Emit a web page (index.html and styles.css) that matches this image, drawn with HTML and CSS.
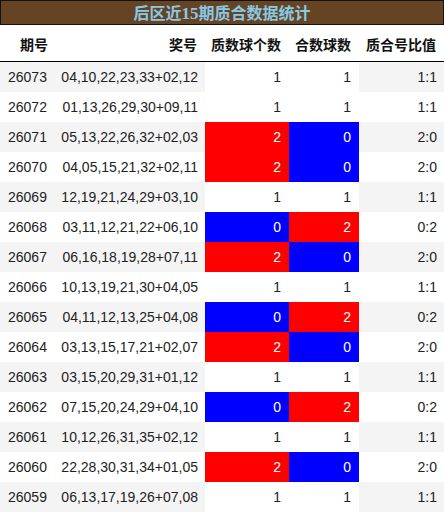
FILE: index.html
```html
<!DOCTYPE html>
<html lang="zh">
<head>
<meta charset="utf-8">
<link rel="stylesheet" href="styles.css">
</head>
<body>
<div class="title">后区近<span class="num">15</span>期质合数据统计</div>
<table class="stats">
<colgroup>
<col class="c1"><col class="c2"><col class="c3"><col class="c4"><col class="c5">
</colgroup>
<thead>
<tr><th class="left">期号</th><th>奖号</th><th>质数球个数</th><th>合数球数</th><th>质合号比值</th></tr>
</thead>
<tbody>
<tr><td class="left">26073</td><td>04,10,22,23,33+02,12</td><td class="n">1</td><td class="n">1</td><td>1:1</td></tr>
<tr><td class="left">26072</td><td>01,13,26,29,30+09,11</td><td class="n">1</td><td class="n">1</td><td>1:1</td></tr>
<tr><td class="left">26071</td><td>05,13,22,26,32+02,03</td><td class="n red">2</td><td class="n blue">0</td><td>2:0</td></tr>
<tr><td class="left">26070</td><td>04,05,15,21,32+02,11</td><td class="n red">2</td><td class="n blue">0</td><td>2:0</td></tr>
<tr><td class="left">26069</td><td>12,19,21,24,29+03,10</td><td class="n">1</td><td class="n">1</td><td>1:1</td></tr>
<tr><td class="left">26068</td><td>03,11,12,21,22+06,10</td><td class="n blue">0</td><td class="n red">2</td><td>0:2</td></tr>
<tr><td class="left">26067</td><td>06,16,18,19,28+07,11</td><td class="n red">2</td><td class="n blue">0</td><td>2:0</td></tr>
<tr><td class="left">26066</td><td>10,13,19,21,30+04,05</td><td class="n">1</td><td class="n">1</td><td>1:1</td></tr>
<tr><td class="left">26065</td><td>04,11,12,13,25+04,08</td><td class="n blue">0</td><td class="n red">2</td><td>0:2</td></tr>
<tr><td class="left">26064</td><td>03,13,15,17,21+02,07</td><td class="n red">2</td><td class="n blue">0</td><td>2:0</td></tr>
<tr><td class="left">26063</td><td>03,15,20,29,31+01,12</td><td class="n">1</td><td class="n">1</td><td>1:1</td></tr>
<tr><td class="left">26062</td><td>07,15,20,24,29+04,10</td><td class="n blue">0</td><td class="n red">2</td><td>0:2</td></tr>
<tr><td class="left">26061</td><td>10,12,26,31,35+02,12</td><td class="n">1</td><td class="n">1</td><td>1:1</td></tr>
<tr><td class="left">26060</td><td>22,28,30,31,34+01,05</td><td class="n red">2</td><td class="n blue">0</td><td>2:0</td></tr>
<tr><td class="left">26059</td><td>06,13,17,19,26+07,08</td><td class="n">1</td><td class="n">1</td><td>1:1</td></tr>
</tbody>
</table>
</body>
</html>
```
FILE: styles.css
```css
html, body {
  margin: 0;
  padding: 0;
  background: #ffffff;
}
body {
  width: 444px;
  font-family: "Liberation Sans", Arial, "Noto Sans CJK SC", sans-serif;
  color: #222222;
}
.title {
  box-sizing: border-box;
  height: 25px;
  border: 1px solid #111111;
  background: #664423;
  color: #87c9e6;
  font-family: "Noto Sans CJK SC", sans-serif;
  font-weight: bold;
  font-size: 16px;
  line-height: 22px;
  text-align: center;
}
.title .num {
  font-family: "Liberation Serif", "Noto Sans CJK SC", serif;
  font-weight: bold;
  font-size: 17px;
}
.stats {
  width: 444px;
  border-collapse: collapse;
  table-layout: fixed;
  margin-top: 1px;
}
.c1 { width: 57px; }
.c2 { width: 148px; }
.c3 { width: 84px; }
.c4 { width: 70px; }
.c5 { width: 85px; }
.stats th {
  height: 35px;
  padding: 0 8px 0 0;
  font-family: "Noto Sans CJK SC", sans-serif;
  font-weight: bold;
  font-size: 14px;
  color: #111111;
  text-align: right;
  border-bottom: 1px solid #000000;
  white-space: nowrap;
}
.stats th.left {
  text-align: left;
  padding: 0 0 0 20px;
}
.stats td {
  height: 30px;
  padding: 0 7px 0 0;
  font-size: 14px;
  text-align: right;
  white-space: nowrap;
}
.stats td.left {
  text-align: left;
  padding: 0 0 0 8px;
}
.stats tbody tr:nth-child(odd) td {
  background: #f4f4f4;
}
.stats tbody tr td.n {
  background: #ffffff;
  padding-right: 8px;
}
.stats tbody tr td.red {
  background: #ff0000;
  color: #ffffff;
}
.stats tbody tr td.blue {
  background: #0000ff;
  color: #ffffff;
}
```
